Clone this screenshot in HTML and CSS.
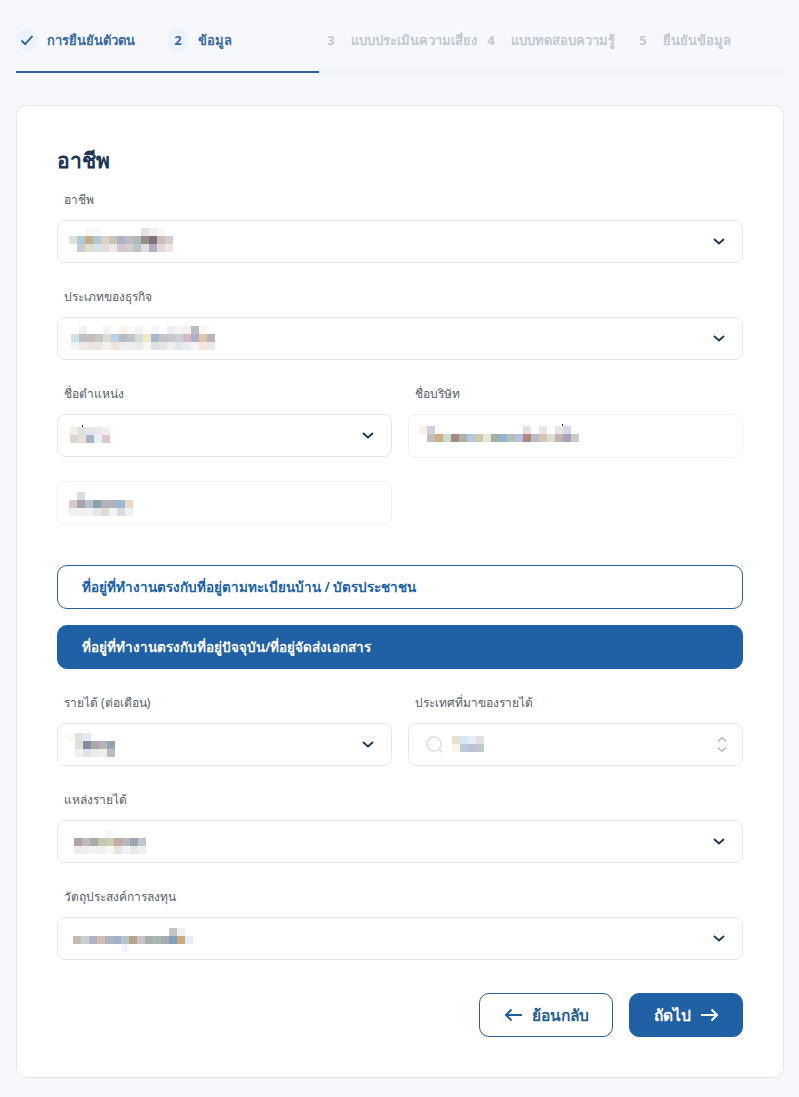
FILE: index.html
```html
<!DOCTYPE html>
<html lang="th">
<head>
  <meta charset="utf-8">
  <title>ข้อมูล</title>
  <link rel="stylesheet" href="styles.css">
</head>
<body>
  <div class="steps">
    <div class="step step-done">
      <span class="step-num">
        <svg width="14" height="14" viewBox="0 0 14 14"><path d="M1.5 7.5 L5.2 11.2 L12.5 3" fill="none" stroke="#2f6096" stroke-width="1.8"/></svg>
      </span>
      <span class="step-text">การยืนยันตัวตน</span>
    </div>
    <div class="step step-done">
      <span class="step-num">2</span>
      <span class="step-text">ข้อมูล</span>
    </div>
    <div class="step"><span class="step-num">3</span><span class="step-text">แบบประเมินความเสี่ยง</span></div>
    <div class="step"><span class="step-num">4</span><span class="step-text">แบบทดสอบความรู้</span></div>
    <div class="step"><span class="step-num">5</span><span class="step-text">ยืนยันข้อมูล</span></div>
  </div>
  <div class="progress"><div class="progress-bar"></div></div>

  <div class="card">
    <h2 class="title">อาชีพ</h2>

    <div class="field">
      <label>อาชีพ</label>
      <div class="input">
        <span class="mosaic m1" data-rows="-,-,f8f8f4,f6fafc,-,-,-,-,-,e4e2e8,f0eff2,fbf6f3,-|e2e2dc,aecbd8,c8ad8c,b5c6d4,dcd2c8,ccc3b8,adb2c4,bcbcc8,b0b8c0,948e84,7e7480,ccbeb4,d4ccd4|fdfcf4,c8ccd6,e2dccc,d4e2ea,e4dcd8,eee8e4,d0c8d4,d8d0c8,bcc4c8,dce0e0,b4aebc,e4d8dc,f0e6e0"></span>
        <svg class="chevron" width="12" height="7" viewBox="0 0 12 7"><path d="M1 1 L6 5.5 L11 1" fill="none" stroke="#1b3556" stroke-width="1.8"/></svg>
      </div>
    </div>

    <div class="field">
      <label>ประเภทของธุรกิจ</label>
      <div class="input">
        <span class="mosaic m2" data-rows="-,f0f0f0,-,-,f0f4f8,-,fcf4e8,f6fafc,f6f2f2,-,f2f6fa,-,f0eaf2,f8f4f2,f4f0f0,b8bec4,fbf6f2,-|cfe2ea,bcc0c4,c8bcb8,c4c8c8,dcdcd0,b8d4e4,b4bcc0,c0c4c4,d4dce0,f0e8c0,a8b8cc,c4c4c8,c4c8c8,c8d0d8,d4b8c4,acb0c8,e0c4ac,b8b4bc|eef4f8,f0e8e4,e8e4e0,eae4e4,f2f2f0,f0e4d4,eaf0f2,eef0f0,eaecec,f8f6ee,dce0e8,e0e6ea,f0f0f0,e0e4ec,eaecf0,f2f6f8,f4e4dc,f0e8e4"></span>
        <svg class="chevron" width="12" height="7" viewBox="0 0 12 7"><path d="M1 1 L6 5.5 L11 1" fill="none" stroke="#1b3556" stroke-width="1.8"/></svg>
      </div>
    </div>

    <div class="field-row">
      <div class="field">
        <label>ชื่อตำแหน่ง</label>
        <div class="input">
          <span class="mosaic m3" data-rows="f6ece6,d8e4dc,e4e4ea,eae6ec,f4eeee|d8d8d4,e8e0d8,a8b4c4,e8f0f8,dcc8cc"></span>
          <svg class="chevron" width="12" height="7" viewBox="0 0 12 7"><path d="M1 1 L6 5.5 L11 1" fill="none" stroke="#1b3556" stroke-width="1.8"/></svg>
        </div>
      </div>
      <div class="field field-tall">
        <label>ชื่อบริษัท</label>
        <div class="input input-text">
          <span class="mosaic m5" data-rows="faf0e8,d0d0e0,-,-,-,-,-,-,-,-,-,-,-,e8e0e0,-,e8e6ec,-,e4e8e0,d8d8e8,-|-,c8bcc4,ccb084,c8dcd4,a48c84,b4b0a8,b4c8dc,d0c8ac,e4e8d8,a4b0a0,98b4d0,b4c0c0,b8c0dc,ac8880,bcbcc4,d4c8ac,dcdcd0,c4b4ac,a8a0b8,cccccc"></span>
        </div>
      </div>
    </div>

    <div class="field-row">
      <div class="field field-last">
        <div class="input input-text">
          <span class="mosaic m4" data-rows="-,dcdce4,-,-,-,-,-,-|dcccc8,a8a4ac,bcc0cc,88a4a8,b4b0b8,acb4c0,9cb8d4,e8d8c4|f0f0f0,f0f0f0,f2f2f6,e4e8e8,e0dcd4,f0f4f4,d8dce0,eef2f2"></span>
        </div>
      </div>
    </div>

    <div class="choice">ที่อยู่ที่ทำงานตรงกับที่อยู่ตามทะเบียนบ้าน / บัตรประชาชน</div>
    <div class="choice choice-on">ที่อยู่ที่ทำงานตรงกับที่อยู่ปัจจุบัน/ที่อยู่จัดส่งเอกสาร</div>

    <div class="field-row">
      <div class="field">
        <label>รายได้ (ต่อเดือน)</label>
        <div class="input">
          <span class="mosaic m6" data-rows="fbf9f6,dce4e0,e8e8f0,-,-,-|-,e0e0d4,848ca4,aca8a8,bcb0b8,94a4b4|-,f0f0f0,e0e0e8,e8ecec,eef0ec,bcbcbc"></span>
          <svg class="chevron" width="12" height="7" viewBox="0 0 12 7"><path d="M1 1 L6 5.5 L11 1" fill="none" stroke="#1b3556" stroke-width="1.8"/></svg>
        </div>
      </div>
      <div class="field">
        <label>ประเทศที่มาของรายได้</label>
        <div class="input">
          <svg class="search" width="18" height="18" viewBox="0 0 18 18"><circle cx="8" cy="8" r="7" fill="none" stroke="#d9dde1" stroke-width="1.4"/><path d="M13 13 L16.5 16.5" stroke="#d9dde1" stroke-width="1.4"/></svg>
          <span class="mosaic m7" data-rows="e4e0d4,d4e8f4,e4ecf8,e0e0e4|fdf4e8,b8cce0,bcc0d4,c0c8d0"></span>
          <svg class="updown" width="10" height="17" viewBox="0 0 10 17"><path d="M1 5.5 L5 1.5 L9 5.5 M1 11.5 L5 15.5 L9 11.5" fill="none" stroke="#a9b1b9" stroke-width="1.2"/></svg>
        </div>
      </div>
    </div>

    <div class="field">
      <label>แหล่งรายได้</label>
      <div class="input">
        <span class="mosaic m8" data-rows="-,-,-,-,f2f8fc,-,-,-,-|b0a4a4,c4b8b8,a8acac,c4c8b0,ccccb4,c0aca0,b8b4c0,98a8b0,c0c4d0|f0ece8,f2f0ee,f2f2f0,f0f0ee,f8f6f0,e8e4e2,eef4f8,e8e8e8,f0f0f0"></span>
        <svg class="chevron" width="12" height="7" viewBox="0 0 12 7"><path d="M1 1 L6 5.5 L11 1" fill="none" stroke="#1b3556" stroke-width="1.8"/></svg>
      </div>
    </div>

    <div class="field">
      <label>วัตถุประสงค์การลงทุน</label>
      <div class="input">
        <span class="mosaic m9" data-rows="-,-,-,-,-,-,-,-,-,-,-,-,c4c4c0,f0f0f4,-|c4bcb4,c8d0cc,acb4c8,d4bcac,b0b4c0,a0b0c8,b4c4cc,b8a48c,ccc4c4,a8b0b0,acb4b4,a8acac,80a0bc,cca884,e4ecf4|-,-,-,-,-,-,f2f6fc,-,-,-,-,-,-,-,-"></span>
        <svg class="chevron" width="12" height="7" viewBox="0 0 12 7"><path d="M1 1 L6 5.5 L11 1" fill="none" stroke="#1b3556" stroke-width="1.8"/></svg>
      </div>
    </div>

    <div class="actions">
      <button class="btn btn-back">
        <svg width="19" height="14" viewBox="0 0 19 14"><path d="M18 7 H2 M7.5 1.5 L2 7 L7.5 12.5" fill="none" stroke="#20609f" stroke-width="2"/></svg>
        ย้อนกลับ
      </button>
      <button class="btn btn-next">
        ถัดไป
        <svg width="19" height="14" viewBox="0 0 19 14"><path d="M1 7 H17 M11.5 1.5 L17 7 L11.5 12.5" fill="none" stroke="#fff" stroke-width="2"/></svg>
      </button>
    </div>
  </div>
  <script src="script.js"></script>
</body>
</html>
```

FILE: styles.css
```css
body {
  margin: 0;
  background-color: #f6f8fc;
  font-family: "Noto Sans", "Open Sans", sans-serif;
  color: #56606b;
}

/* steps */
.steps {
  display: grid;
  grid-template-columns: 151px 153px 160px 152px 1fr;
  margin: 0 15px 0 16px;
  padding-top: 29px;
}

.step {
  display: flex;
  align-items: center;
  height: 22px;
  color: #c4c9cf;
  font-size: 13px;
  font-weight: 600;
  white-space: nowrap;
}

.step-num {
  display: flex;
  justify-content: center;
  align-items: center;
  width: 22px;
  height: 22px;
  margin-right: 9px;
  border-radius: 50%;
  font-weight: 700;
  flex-shrink: 0;
}

.step-done {
  color: #3a6a9e;
}

.step-done .step-num {
  background-color: #ebf2fa;
}

.progress {
  height: 2px;
  margin: 20px 15px 0 16px;
  background-color: #eff3f7;
}

.progress-bar {
  width: 303px;
  height: 2px;
  background-color: #2f6096;
}

/* card */
.card {
  margin: 32px 15px 0 16px;
  padding: 40px;
  background-color: #fff;
  border: 1px solid #e4e7ed;
  border-radius: 10px;
}

.title {
  margin: 0 0 16px;
  height: 28px;
  line-height: 28px;
  font-size: 21px;
  font-weight: 700;
  color: #1b3556;
}

.field {
  margin-bottom: 24px;
}

.field-tall {
  margin-bottom: 23px;
}

.field-last {
  margin-bottom: 0;
}

.field label {
  display: block;
  height: 20px;
  line-height: 20px;
  margin: 0 0 10px 7px;
  font-size: 12px;
}

.field-row {
  display: grid;
  grid-template-columns: 1fr 1fr;
  gap: 16px;
  align-items: start;
}

.input {
  display: flex;
  align-items: flex-start;
  height: 43px;
  box-sizing: border-box;
  background-color: #fff;
  border: 1px solid #e3e6ec;
  border-radius: 8px;
}

.input-text {
  height: 44px;
  border-color: #f0f2f5;
}

.chevron {
  align-self: center;
  margin-left: auto;
  margin-right: 17px;
}

.search {
  align-self: center;
  margin-left: 17px;
  margin-right: 8px;
}

.updown {
  align-self: center;
  margin-left: auto;
  margin-right: 15px;
}

/* blurred values */
.mosaic {
  position: relative;
  display: block;
}

.mosaic-row {
  display: flex;
}

.mosaic-row span {
  width: 8px;
  height: 8px;
}

.m1 { margin: 7px 0 0 11px; }
.m2 { margin: 8px 0 0 13px; }
.m3 { margin: 12px 0 0 12px; }
.m4 { margin: 10px 0 0 11px; }
.m5 { margin: 11px 0 0 10px; }
.m6 { margin: 9px 0 0 9px; }
.m7 { margin: 12px 0 0 0; }
.m8 { margin: 9px 0 0 16px; }
.m9 { margin: 10px 0 0 15px; }

.m3::before,
.m5::before {
  content: "";
  position: absolute;
  top: -2px;
  left: 12px;
  width: 1px;
  height: 2px;
  background-color: #333;
}

.m5::before {
  left: 143px;
}

/* address choices */
.choice {
  height: 44px;
  line-height: 42px;
  box-sizing: border-box;
  margin-bottom: 16px;
  padding-left: 24px;
  border: 1px solid #2a5f96;
  border-radius: 10px;
  color: #2060a5;
  font-size: 13.5px;
  font-weight: 600;
}

.field-row + .choice {
  margin-top: 40px;
}

.choice-on {
  margin-top: 0;
  margin-bottom: 24px;
  background-color: #2060a5;
  border-color: #2060a5;
  color: #fff;
}

/* buttons */
.actions {
  display: flex;
  justify-content: flex-end;
  gap: 16px;
  margin-top: 33px;
}

.btn {
  display: flex;
  justify-content: center;
  align-items: center;
  gap: 9px;
  height: 44px;
  border-radius: 10px;
  font-family: inherit;
  font-size: 15.5px;
  font-weight: 600;
}

.btn-back {
  width: 134px;
  background-color: #fff;
  border: 1px solid #2a5f96;
  color: #2a5f96;
}

.btn-next {
  width: 114px;
  background-color: #2060a5;
  border: 1px solid #2060a5;
  color: #fff;
}
```

FILE: script.js
```js
// builds the blurred value blocks from the colour lists in data-rows
document.querySelectorAll('.mosaic').forEach(mosaic => {
  mosaic.dataset.rows.split('|').forEach(row => {
    const rowEl = document.createElement('div');
    rowEl.className = 'mosaic-row';
    row.split(',').forEach(color => {
      const cell = document.createElement('span');
      if (color !== '-') {
        cell.style.backgroundColor = '#' + color;
      }
      rowEl.appendChild(cell);
    });
    mosaic.appendChild(rowEl);
  });
});
```
